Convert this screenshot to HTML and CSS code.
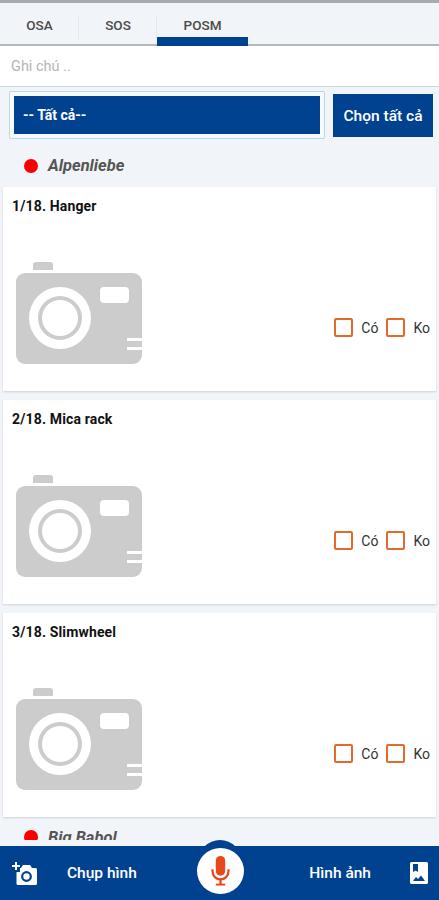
FILE: index.html
```html
<!DOCTYPE html>
<html lang="en">
<head>
    <meta charset="UTF-8">
    <title>POSM</title>
    <link rel="stylesheet" href="styles.css">
</head>
<body>
    <div class="app">
        <div class="tabs">
            <div class="tab tab-osa">OSA</div>
            <div class="tab tab-sos">SOS</div>
            <div class="tab tab-posm active">POSM</div>
        </div>
        <div class="note">Ghi chú ..</div>
        <div class="filter-row">
            <div class="select-wrap"><div class="select">-- Tất cả--</div></div>
            <div class="select-all">Chọn tất cả</div>
        </div>

        <div class="list">
            <div class="brand"><span class="dot"></span><span class="brand-name">Alpenliebe</span></div>

            <div class="card">
                <div class="card-title">1/18. Hanger</div>
                <div class="card-body">
                    <svg class="photo" viewBox="0 0 126 102"><use href="#camera"/></svg>
                    <div class="checks">
                        <span class="check"></span><span class="check-label">Có</span>
                        <span class="check"></span><span class="check-label">Ko</span>
                    </div>
                </div>
            </div>

            <div class="card">
                <div class="card-title">2/18. Mica rack</div>
                <div class="card-body">
                    <svg class="photo" viewBox="0 0 126 102"><use href="#camera"/></svg>
                    <div class="checks">
                        <span class="check"></span><span class="check-label">Có</span>
                        <span class="check"></span><span class="check-label">Ko</span>
                    </div>
                </div>
            </div>

            <div class="card">
                <div class="card-title">3/18. Slimwheel</div>
                <div class="card-body">
                    <svg class="photo" viewBox="0 0 126 102"><use href="#camera"/></svg>
                    <div class="checks">
                        <span class="check"></span><span class="check-label">Có</span>
                        <span class="check"></span><span class="check-label">Ko</span>
                    </div>
                </div>
            </div>

            <div class="brand brand-next"><span class="dot"></span><span class="brand-name">Big Babol</span></div>
        </div>

        <div class="bottom-bar">
            <svg class="bar-icon add-photo" viewBox="0 0 26 23">
                <path d="M4 0h2v3h3v2H6v3H4V5H1V3h3z" fill="#fff"/>
                <path d="M12 3h7l2 3h3.500A1.500 1.500 0 0 1 26 7.500V21.500A1.500 1.500 0 0 1 24.500 23H7A1.500 1.500 0 0 1 5.500 21.500V10H9V6h1z" fill="#fff"/>
                <circle cx="15.500" cy="14.500" r="4.300" fill="none" stroke="#004290" stroke-width="2.200"/>
            </svg>
            <span class="bar-label label-left">Chụp hình</span>
            <div class="mic-ring">
                <div class="mic-circle">
                    <svg class="mic" viewBox="0 0 20 32">
                        <rect x="5" y="0" width="10" height="21" rx="5" fill="#e8481a"/>
                        <path d="M1.500 14v2.500a8.500 8.500 0 0 0 17 0V14" fill="none" stroke="#e8481a" stroke-width="2.400"/>
                        <rect x="8.800" y="24" width="2.400" height="6" fill="#e8481a"/>
                        <rect x="5" y="29.500" width="10" height="2" fill="#e8481a"/>
                    </svg>
                </div>
            </div>
            <span class="bar-label label-right">Hình ảnh</span>
            <svg class="bar-icon album" viewBox="0 0 18 22">
                <rect width="18" height="22" rx="1.500" fill="#fff"/>
                <path d="M3 2h5v8L5.500 8.500 3 10z" fill="#004290"/>
                <path d="M3 19l3-4 2 2 3-3.500 4 5.500z" fill="#004290"/>
            </svg>
        </div>
    </div>

    <svg class="defs" width="0" height="0">
        <defs>
            <g id="camera">
                <path d="M17 8V3A3 3 0 0 1 20 0h14A3 3 0 0 1 37 3V8z" fill="#cccccc"/>
                <path d="M9 11h108a9 9 0 0 1 9 9v73a9 9 0 0 1-9 9H9a9 9 0 0 1-9-9V20a9 9 0 0 1 9-9z" fill="#cccccc"/>
                <circle cx="44" cy="56" r="31" fill="#fff"/>
                <circle cx="44" cy="56" r="22" fill="#cccccc"/>
                <circle cx="44" cy="56" r="18" fill="#fff"/>
                <rect x="84" y="25" width="29" height="16" rx="4" fill="#fff"/>
                <rect x="111" y="76" width="15" height="3" fill="#fff"/>
                <rect x="111" y="85" width="15" height="3" fill="#fff"/>
            </g>
        </defs>
    </svg>
</body>
</html>
```

FILE: styles.css
```css
* {
    box-sizing: border-box;
}
html, body {
    margin: 0;
    padding: 0;
}
body {
    font-family: 'Roboto', sans-serif;
    background-color: #f1f4f8;
}
.app {
    width: 439px;
    height: 900px;
    display: flex;
    flex-direction: column;
    overflow: hidden;
    border-top: 3px solid #a8abae;
}
.tabs {
    display: flex;
    height: 43px;
    flex-shrink: 0;
    border-bottom: 2px solid #b4b8bc;
    background-color: #f1f4f8;
}
.tab {
    display: flex;
    align-items: center;
    justify-content: center;
    height: 43px;
    font-size: 13.500px;
    font-weight: 500;
    color: #4a4a4a;
}
.tab-osa {
    width: 79px;
}
.tab-sos {
    width: 78px;
}
.tab-posm {
    width: 91px;
}
.tab-osa, .tab-sos {
    background-image: linear-gradient(#e6e9ec, #e6e9ec);
    background-size: 1px 24px;
    background-position: right 12px;
    background-repeat: no-repeat;
}
.tab.active {
    border-bottom: 9px solid #004290;
    padding-top: 9px;
}
.note {
    height: 41px;
    flex-shrink: 0;
    padding: 0 11px;
    display: flex;
    align-items: center;
    background-color: #fff;
    border-bottom: 1px solid #c8d8dc;
    font-size: 14.500px;
    color: #b5b5b5;
}
.filter-row {
    display: flex;
    gap: 8px;
    padding: 4px 6px 0 9px;
    flex-shrink: 0;
}
.select-wrap {
    width: 316px;
    height: 48px;
    padding: 4px;
    background-color: #f6fafc;
    border: 1px solid #b9d6e6;
    border-radius: 2px;
}
.select {
    height: 100%;
    display: flex;
    align-items: center;
    padding-left: 9px;
    background-color: #004290;
    font-size: 14px;
    font-weight: 700;
    color: #fff;
}
.select-all {
    width: 100px;
    height: 43px;
    margin-top: 3px;
    display: flex;
    align-items: center;
    justify-content: center;
    background-color: #004290;
    font-size: 15.500px;
    font-weight: 500;
    color: #fff;
}
.list {
    flex: 1;
    min-height: 0;
    overflow: hidden;
    padding: 0 0 0 3px;
}
.brand {
    display: flex;
    align-items: center;
    height: 48px;
    padding-left: 21px;
    padding-top: 6px;
}
.brand-next {
    height: 22px;
    align-items: flex-start;
    padding-top: 4px;
}
.dot {
    flex-shrink: 0;
    width: 14px;
    height: 14px;
    border-radius: 50%;
    background-color: #fa0000;
    margin-right: 10px;
}
.brand-name {
    font-size: 16.500px;
    line-height: 16px;
    font-weight: 700;
    font-style: italic;
    color: #555;
}
.card {
    width: 433px;
    height: 204px;
    margin-bottom: 9px;
    padding: 12px 10px 0 9px;
    background-color: #fff;
    box-shadow: 0 1px 2px rgba(0, 0, 0, 0.15);
}
.card-title {
    font-size: 14px;
    font-weight: 700;
    line-height: 15px;
    letter-spacing: 0.150px;
    color: #111;
}
.card-body {
    display: flex;
    justify-content: space-between;
    align-items: flex-end;
    margin-top: 48px;
    padding-left: 4px;
}
.photo {
    width: 126px;
    height: 102px;
}
.checks {
    display: flex;
    align-items: center;
    margin-bottom: 27px;
    margin-right: -4px;
}
.check {
    width: 19px;
    height: 19px;
    border: 2px solid #e4692a;
    border-radius: 2px;
    margin-right: 8px;
}
.check-label {
    font-size: 14px;
    color: #333;
    margin-right: 8px;
}
.check-label:last-child {
    margin-right: 0;
}
.bottom-bar {
    height: 54px;
    margin-top: 6px;
    flex-shrink: 0;
    position: relative;
    display: flex;
    align-items: center;
    background-color: #004290;
}
.bar-icon {
    flex-shrink: 0;
}
.add-photo {
    width: 26px;
    height: 23px;
    margin-left: 11px;
}
.album {
    width: 18px;
    height: 22px;
    margin-left: 39px;
    margin-right: 11px;
}
.bar-label {
    font-size: 15.500px;
    font-weight: 500;
    color: #fff;
}
.label-left {
    margin-left: 30px;
}
.label-right {
    margin-left: auto;
}
.mic-ring {
    position: absolute;
    left: 198px;
    top: -6px;
    width: 44px;
    height: 44px;
    border-radius: 50%;
    background-color: #004290;
}
.mic-circle {
    position: absolute;
    left: -1px;
    top: 8px;
    width: 47px;
    height: 46px;
    border-radius: 50%;
    background-color: #fff;
    display: flex;
    align-items: center;
    justify-content: center;
}
.mic {
    width: 19px;
    height: 30px;
}
.defs {
    position: absolute;
}
```
